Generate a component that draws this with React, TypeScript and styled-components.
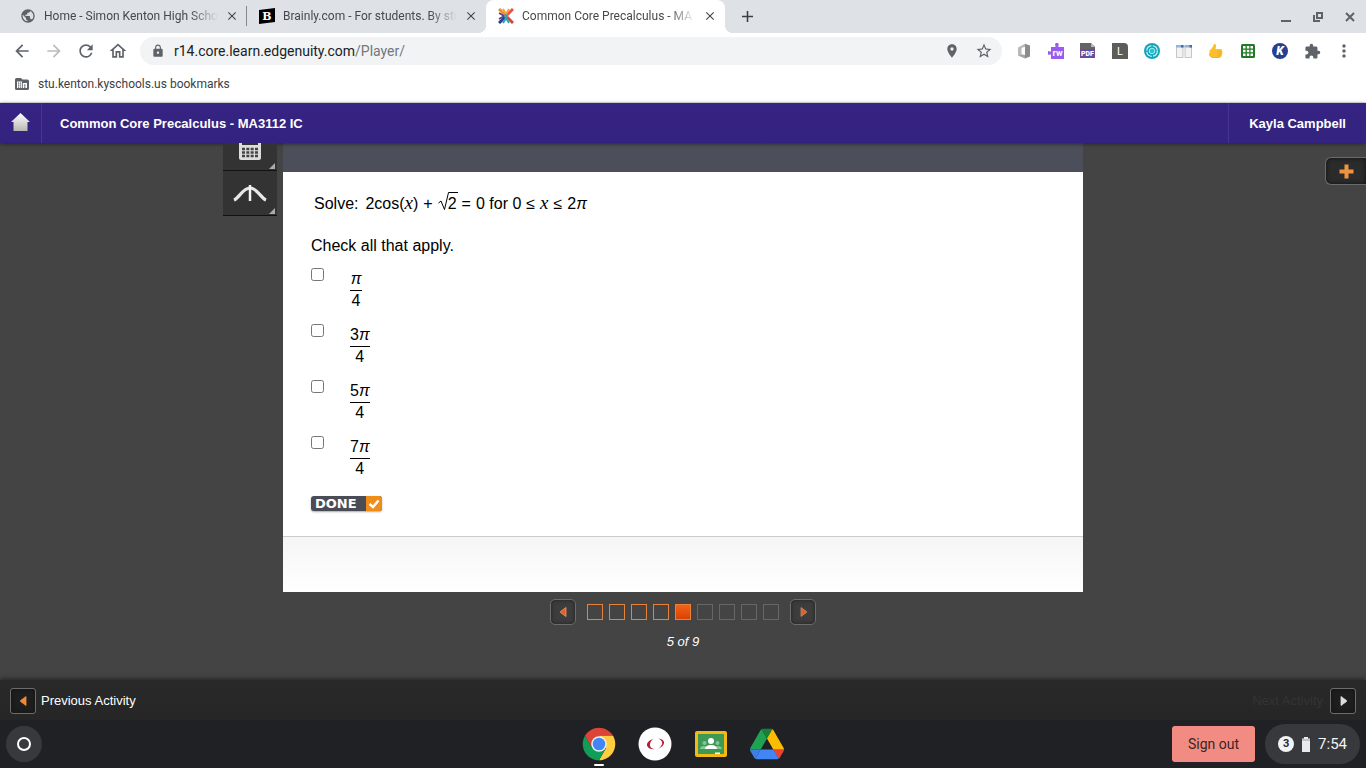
import React from 'react';
import styled, { createGlobalStyle, css } from 'styled-components';
import {
  MdAdd, MdArrowBack, MdArrowForward, MdClose, MdExtension, MdLock,
  MdMoreVert, MdOutlineHome, MdPlace, MdPublic, MdRefresh, MdStarBorder,
} from 'react-icons/md';

const GlobalStyle = createGlobalStyle`
  * { box-sizing: border-box; }
  body { margin: 0; background: #444; }
  button { font: inherit; color: inherit; border: 0; padding: 0; background: none; cursor: pointer; }
  a { color: inherit; text-decoration: none; }
  svg { display: block; flex: none; }
`;

const sans = '"Liberation Sans", Arial, sans-serif';
const roboto = 'Roboto, sans-serif';

const Screen = styled.div`
  min-height: 100vh;
  display: flex;
  flex-direction: column;
  font-family: ${sans};
`;

/* ---------- browser chrome ---------- */

const TabStrip = styled.div`
  display: flex;
  height: 33px;
  padding-left: 8px;
  background: #dee1e6;
  font: 12px/16px ${roboto};
  color: #45494d;
`;

const Tab = styled.div<{ $active?: boolean; $divided?: boolean }>`
  position: relative;
  display: flex;
  align-items: center;
  flex: 0 1 239px;
  min-width: 0;
  padding: 0 7px 1px 12px;
  border-radius: 8px 8px 0 0;
  background: ${p => (p.$active ? '#fff' : 'transparent')};
  ${p => p.$divided && css`
    &::after {
      content: '';
      position: absolute;
      right: 0;
      top: 6px;
      width: 1px;
      height: 20px;
      background: #85888c;
    }
  `}
  ${p => p.$active && css`
    &::before, &::after {
      content: '';
      position: absolute;
      bottom: 0;
      width: 8px;
      height: 8px;
    }
    &::before { left: -8px; background: radial-gradient(circle at 0 0, transparent 8px, #fff 8px); }
    &::after { right: -8px; background: radial-gradient(circle at 100% 0, transparent 8px, #fff 8px); }
  `}
`;

const TabTitle = styled.span`
  flex: 1;
  min-width: 0;
  margin: 0 6px 0 8px;
  overflow: hidden;
  white-space: nowrap;
  mask-image: linear-gradient(to right, #000 calc(100% - 28px), transparent);
`;

const IconButton = styled.button<{ $size: number; $color?: string }>`
  display: flex;
  align-items: center;
  justify-content: center;
  flex: none;
  width: ${p => p.$size}px;
  height: ${p => p.$size}px;
  color: ${p => p.$color ?? '#5f6368'};
`;

const NewTab = styled(IconButton)`
  margin: 4px 0 0 10px;
`;

const WindowControls = styled.div`
  display: flex;
  align-items: center;
  margin-left: auto;
`;

const Toolbar = styled.div`
  display: flex;
  align-items: center;
  height: 36px;
  padding: 0 6px;
  background: #fff;
`;

const AddressBar = styled.form`
  display: flex;
  align-items: center;
  flex: 1;
  height: 28px;
  margin: 0 6px;
  padding: 0 2px 0 11px;
  border-radius: 14px;
  background: #f1f3f4;
  color: #5f6368;
`;

const UrlField = styled.label`
  position: relative;
  flex: 1;
  margin-left: 9px;
  font: 14px/20px ${roboto};
`;

const UrlInput = styled.input`
  width: 100%;
  height: 20px;
  padding: 0;
  border: 0;
  outline: 0;
  background: none;
  font: inherit;
  color: transparent;
`;

const UrlText = styled.span`
  position: absolute;
  inset: 0;
  pointer-events: none;
  color: #74777b;
  b { font-weight: 400; color: #202124; }
`;

const BookmarkBar = styled.div`
  display: flex;
  align-items: center;
  height: 34px;
  padding: 0 14px 4px;
  border-bottom: 1px solid #e4e4ea;
  background: #fff;
`;

const Bookmark = styled.a`
  display: flex;
  align-items: center;
  gap: 8px;
  font: 12px/16px ${roboto};
  color: #3c4043;
`;

/* ---------- course player ---------- */

const CourseBar = styled.header`
  position: relative;
  display: flex;
  align-items: stretch;
  height: 40px;
  background: linear-gradient(#372382, #33237f);
  box-shadow: 0 1px 4px rgba(0, 0, 0, 0.5);
  color: #fff;
  font-size: 13px;
  line-height: 16px;
  font-weight: bold;
`;

const HomeLink = styled.a`
  display: flex;
  align-items: center;
  justify-content: center;
  width: 42px;
  padding-bottom: 2px;
  border-right: 1px solid #46368f;
`;

const CourseTitle = styled.h1`
  display: flex;
  align-items: center;
  margin: 0;
  padding: 2px 0 0 18px;
  font: inherit;
`;

const Student = styled.div`
  display: flex;
  align-items: center;
  margin-left: auto;
  padding: 2px 20px 0;
  border-left: 1px solid #46368f;
`;

const Workspace = styled.main`
  flex: 1;
  display: grid;
  grid-template-columns: 1fr minmax(0, 800px) 1fr;
  align-items: start;
  background: #444;
`;

const ToolRail = styled.div`
  display: flex;
  flex-direction: column;
  align-items: flex-end;
  padding-right: 6px;
`;

const ToolButton = styled.button<{ $height: number }>`
  position: relative;
  display: flex;
  align-items: flex-end;
  justify-content: center;
  width: 54px;
  height: ${p => p.$height}px;
  padding-bottom: 10px;
  overflow: hidden;
  background: #333;
  border-bottom: 1px solid #111;
  &::after {
    content: '';
    position: absolute;
    right: 2px;
    bottom: 1px;
    border: 3px solid transparent;
    border-right-color: #aaa;
    border-bottom-color: #aaa;
  }
`;

const NotesTab = styled.button`
  display: flex;
  align-items: center;
  justify-self: end;
  width: 41px;
  height: 28px;
  margin-top: 14px;
  padding-left: 13px;
  border: 1px solid #666c70;
  border-right: 0;
  border-radius: 6px 0 0 6px;
  background: #2b2b2b;
  box-shadow: inset 0 0 4px #111;
`;

const StageTop = styled.div`
  height: 29px;
  background: #4c4e59;
`;

const Question = styled.form`
  display: flex;
  flex-direction: column;
  align-items: flex-start;
  padding: 20px 28px 25px;
  background: #fff;
  color: #000;
  font-size: 16px;
  line-height: 24px;
`;

const Equation = styled.div`
  display: flex;
  align-items: baseline;
  gap: 5px;
  height: 24px;
  margin-left: 3px;
  white-space: nowrap;
`;

const Variable = styled.i`
  font-family: "Liberation Serif", serif;
  font-size: 19px;
  line-height: 20px;
`;

const Pi = styled.i`
  font-family: ${sans};
`;

const Prompt = styled.span`
  margin-right: 2px;
`;

const Root = styled.span`
  position: relative;
  padding-left: 10px;
  svg { position: absolute; left: 0; top: 0; }
`;

const Instruction = styled.p`
  margin: 18px 0 10px;
  line-height: 24px;
`;

const Option = styled.label`
  display: flex;
  align-items: flex-start;
  height: 56px;
  input { width: 13px; height: 13px; margin: 0 26px 0 0; }
`;

const Fraction = styled.span`
  display: flex;
  flex-direction: column;
  align-items: center;
  margin-top: 2px;
  line-height: 20px;
`;

const Numerator = styled.span`
  height: 21px;
  min-width: 12px;
  line-height: 18px;
  text-align: center;
  border-bottom: 1px solid #000;
`;

const DoneButton = styled.button`
  display: flex;
  align-items: center;
  height: 15px;
  margin-top: 4px;
  padding-left: 4px;
  gap: 9px;
  border-radius: 3px;
  overflow: hidden;
  background: #4a4c55;
  box-shadow: 0 1px 2px #aaa;
  color: #fff;
  font: bold 13px/15px "DejaVu Sans", sans-serif;
`;

const DoneTick = styled.span`
  display: flex;
  align-items: center;
  justify-content: center;
  width: 16px;
  height: 15px;
  background: #f08c1a;
`;

const StageBottom = styled.div`
  height: 56px;
  border-top: 1px solid #ccc;
  background: linear-gradient(#f5f5f5, #fff);
`;

const Pager = styled.nav`
  display: flex;
  align-items: center;
  justify-content: center;
  gap: 11px;
  padding-top: 7px;
`;

const ArrowButton = styled.button<{ $round?: boolean }>`
  display: flex;
  align-items: center;
  justify-content: center;
  width: 26px;
  height: 26px;
  border: 1px solid #6c6c6c;
  border-radius: ${p => (p.$round ? 5 : 3)}px;
  background: ${p => (p.$round ? '#3d3d3d' : '#1e1e1e')};
  box-shadow: inset 0 0 4px ${p => (p.$round ? '#222' : '#111')};
`;

const Steps = styled.div`
  display: flex;
  gap: 6px;
`;

const Step = styled.button<{ $state: 'done' | 'current' | 'todo' }>`
  width: 16px;
  height: 16px;
  border: 1px solid ${p => (p.$state === 'todo' ? '#666' : '#e8813a')};
  background: ${p => (p.$state === 'current' ? 'linear-gradient(#f4611a, #d84200)' : 'transparent')};
`;

const PageCount = styled.p`
  margin: 9px 0 0;
  text-align: center;
  font-size: 13px;
  line-height: 16px;
  font-style: italic;
  color: #fff;
`;

const ActivityBar = styled.footer`
  display: flex;
  align-items: center;
  justify-content: space-between;
  height: 40px;
  padding: 2px 10px 0;
  background: linear-gradient(#292929, #262626);
  box-shadow: 0 -1px 5px rgba(0, 0, 0, 0.5);
`;

const Activity = styled.label<{ $muted?: boolean }>`
  display: flex;
  align-items: center;
  gap: ${p => (p.$muted ? 7 : 5)}px;
  font-size: 13px;
  line-height: 16px;
  color: ${p => (p.$muted ? '#343434' : '#fff')};
`;

/* ---------- system shelf ---------- */

const Shelf = styled.div`
  display: grid;
  grid-template-columns: 1fr auto 1fr;
  align-items: center;
  height: 48px;
  padding: 0 6px;
  background: #202124;
  font-family: ${roboto};
`;

const Launcher = styled(IconButton)`
  border-radius: 50%;
  background: #37393c;
`;

const Apps = styled.div`
  display: flex;
  gap: 22px;
`;

const AppButton = styled.button<{ $running?: boolean }>`
  position: relative;
  width: 34px;
  height: 34px;
  ${p => p.$running && css`
    &::after {
      content: '';
      position: absolute;
      left: 12px;
      bottom: -5px;
      width: 10px;
      height: 2px;
      border-radius: 1px;
      background: #fff;
    }
  `}
`;

const Tray = styled.div`
  display: flex;
  justify-content: flex-end;
  align-items: center;
  gap: 10px;
`;

const SignOut = styled.button`
  height: 36px;
  padding: 0 16px;
  border-radius: 3px;
  background: #f28b82;
  color: #3a2426;
  font-size: 14px;
  line-height: 20px;
`;

const Status = styled.button`
  display: flex;
  align-items: center;
  gap: 8px;
  height: 40px;
  padding: 0 13px;
  border-radius: 20px;
  background: #37393c;
  color: #f1f3f4;
  font-size: 15px;
  line-height: 20px;
`;

const Notices = styled.span`
  width: 16px;
  height: 16px;
  border-radius: 50%;
  background: #f1f3f4;
  color: #26282b;
  font-size: 11px;
  font-weight: 700;
  line-height: 16px;
  text-align: center;
`;

/* ---------- drawings ---------- */

const BrainlyIcon = () => (
  <svg width="16" height="16" viewBox="0 0 16 16">
    <path d="M0 2 16 0v14L0 16z" fill="#000" />
    <text x="8" y="12" fontSize="11" fontWeight="700" textAnchor="middle" fill="#fff" fontFamily="DejaVu Serif, serif">B</text>
  </svg>
);

const EdgenuityIcon = () => (
  <svg width="16" height="16" viewBox="0 0 16 16" fill="none" strokeWidth="3">
    <path d="M1 1l6 6" stroke="#f08a2c" />
    <path d="M15 1L9 7" stroke="#e4573d" />
    <path d="M1 15l6-6" stroke="#2c3f8f" />
    <path d="M15 15L9 9" stroke="#d8443c" />
    <path d="M5 1l3 5 3-5" stroke="#f5a13a" strokeWidth="2" />
    <path d="M1 5l5 3-5 3" stroke="#5b3a86" strokeWidth="1.5" />
    <path d="M5 15l3-5 3 5" stroke="#2ba5b5" strokeWidth="2" />
    <circle cx="8" cy="8" r="2" fill="#3a9bc0" />
  </svg>
);

const ManagedFolderIcon = () => (
  <svg width="16" height="16" viewBox="0 0 16 16">
    <path d="M2.5 2H7l1.500 1.500h5A1.500 1.500 0 0 1 15 5v7.500a1.500 1.500 0 0 1-1.500 1.500h-11A1.500 1.500 0 0 1 1 12.500v-9A1.500 1.500 0 0 1 2.500 2z" fill="#5f6368" />
    <path d="M3 5.500h5V7h5v5H3z" fill="#fff" />
    <path d="M4 6.500h1.200v1.200H4zM6 6.500h1.200v1.200H6zM4 8.500h1.200v1.200H4zM6 8.500h1.200v1.200H6zM4 10.500h1.200v1.200H4zM6 10.500h1.200v1.200H6zM8 7h.8v5H8zM10 8.500h1.500v1.200H10zM10 10.500h1.500v1.200H10z" fill="#5f6368" />
  </svg>
);

const MinimizeIcon = () => (
  <svg width="12" height="12" viewBox="0 0 12 12"><path d="M1 10h10" stroke="#5f6368" strokeWidth="2" /></svg>
);

const RestoreIcon = () => (
  <svg width="12" height="12" viewBox="0 0 12 12" fill="none" stroke="#5f6368" strokeWidth="2">
    <path d="M5 2h5v5H5z" /><path d="M2 4v6h6" />
  </svg>
);

const CloseWindowIcon = () => (
  <svg width="12" height="12" viewBox="0 0 12 12"><path d="M2 2l8 8M10 2l-8 8" stroke="#5f6368" strokeWidth="2" /></svg>
);

const OfficeIcon = () => (
  <svg width="16" height="16" viewBox="0 0 16 16">
    <path d="M2 4.500L9 .8v3L5.500 5v6.200L2 12.600z" fill="#b9b9b9" />
    <path d="M9 .8l5 1.800v10.800L9 15.400z" fill="#8c8c8c" />
    <path d="M2 12.600l3.500-1.400L9 12v3.400z" fill="#a5a5a5" />
  </svg>
);

const ReadWriteIcon = () => (
  <svg width="16" height="16" viewBox="0 0 16 16">
    <path d="M3 4h4.400V2.600a1.800 1.800 0 1 1 3 0V4H16v12H3v-4.600H1.600a1.800 1.800 0 1 1 0-3H3z" fill="#9a5cf0" />
    <text x="9.600" y="12.600" fontSize="9" fontWeight="700" textAnchor="middle" fill="#fff" fontFamily="Roboto, sans-serif">rw</text>
  </svg>
);

const PdfIcon = () => (
  <svg width="16" height="16" viewBox="0 0 16 16">
    <path d="M0 0h11l4 4v4H0z" fill="#636466" />
    <path d="M11 0v4h4z" fill="#b9babc" />
    <path d="M0 6h15v9H0z" fill="#6c4b9c" />
    <text x="7.500" y="13.200" fontSize="7" fontWeight="900" textAnchor="middle" fill="#fff" fontFamily="Roboto, sans-serif">PDF</text>
  </svg>
);

const LetterIcon = () => (
  <svg width="16" height="16" viewBox="0 0 16 16">
    <path d="M0 0h12a4 4 0 0 1 4 4v12H0z" fill="#5c5c5c" />
    <text x="8" y="12" fontSize="11" textAnchor="middle" fill="#fff" fontFamily="Roboto, sans-serif">L</text>
  </svg>
);

const RingIcon = () => (
  <svg width="16" height="16" viewBox="0 0 16 16" fill="none">
    <circle cx="8" cy="8" r="8" fill="#12a5b8" />
    <circle cx="8" cy="8" r="5.300" stroke="#d8f7fb" strokeWidth="1.200" strokeDasharray="7 1.400" />
    <circle cx="8" cy="8" r="2.800" fill="#21c3d8" stroke="#a8ecf4" />
  </svg>
);

const PanesIcon = () => (
  <svg width="16" height="16" viewBox="0 0 16 16">
    <path d="M.5 2.500h6.500v12H.5zM9 2.500h6.500v12H9z" fill="#f3f3f3" stroke="#c4c6c8" />
    <path d="M0 2h7.500v2.400H0zM8.500 2H16v2.400H8.500z" fill="#94b3d6" />
    <path d="M5 2h2.500v2.400H5zM13.500 2H16v2.400h-2.500z" fill="#3f6fa8" />
  </svg>
);

const ThumbIcon = () => (
  <svg width="16" height="16" viewBox="0 0 16 16">
    <path d="M5.600 1.400c1-1 2.400-.4 2.500 1.100.1 1.300-.3 2.400-.5 3.500h4.900c1.500 0 2 1.300 1.400 2.200.8.6.7 1.700.1 2.200.5.8.2 1.700-.5 2.100.2 1.300-.6 2.200-2 2.200H6c-3 0-4.500-1.300-4.500-4V8.200C1.500 6.600 5.200 5 5.600 1.400z" fill="#fcbf2e" />
    <path d="M9.500 8.600h4M9.500 10.700h4M9.500 12.700h3.300" stroke="#ee9f1c" strokeWidth=".7" />
    <path d="M1.600 10.500c0 2.700 1.500 4 4.400 4h5" fill="none" stroke="#f0a01e" strokeWidth=".8" />
  </svg>
);

const SheetIcon = () => (
  <svg width="16" height="16" viewBox="0 0 16 16">
    <rect x="1" y="1" width="14" height="14" rx="1.500" fill="#1f7a24" />
    <path d="M3 3h2.500v2.500H3zM6.800 3h2.500v2.500H6.800zM10.500 3H13v2.500h-2.500zM3 6.800h2.500v2.500H3zM6.800 6.800h2.500v2.500H6.800zM10.500 6.800H13v2.500h-2.500zM3 10.500h2.500V13H3zM6.800 10.500h2.500V13H6.800zM10.500 10.500H13V13h-2.500z" fill="#fff" />
  </svg>
);

const KamiIcon = () => (
  <svg width="16" height="16" viewBox="0 0 16 16">
    <circle cx="8" cy="8" r="8" fill="#26408f" />
    <text x="8" y="12" fontSize="12" fontWeight="900" fontStyle="italic" textAnchor="middle" fill="#fff" fontFamily="Roboto, sans-serif">K</text>
  </svg>
);

const HouseIcon = () => (
  <svg width="19" height="18" viewBox="0 0 19 18">
    <defs>
      <linearGradient id="house" x2="0" y2="1"><stop stopColor="#fff" /><stop offset="1" stopColor="#b9b7b4" /></linearGradient>
    </defs>
    <path d="M9.500 0L19 9h-2.500v9h-14V9H0z" fill="url(#house)" />
  </svg>
);

const CalculatorIcon = () => (
  <svg width="22" height="24" viewBox="0 0 22 24">
    <rect width="22" height="24" rx="2" fill="#ddd" />
    <path d="M3 3h16v6H3z" fill="#333" />
    <path d="M3 13h16M3 16.500h16M3 20h16" stroke="#444" strokeWidth="2.400" strokeDasharray="3 1.330" />
  </svg>
);

const CurveIcon = () => (
  <svg width="34" height="21" viewBox="0 0 34 21" fill="none">
    <path d="M1 16C6 14 10 4 17 4s11 10 16 12" stroke="#e8e8e8" strokeWidth="3.200" />
    <path d="M17 1v16" stroke="#f4f4f4" strokeWidth="2.500" />
  </svg>
);

const PlusIcon = () => (
  <svg width="15" height="15" viewBox="0 0 15 15"><path d="M7.500 .5v14M.5 7.500h14" stroke="#ee9440" strokeWidth="4" /></svg>
);

const RadicalIcon = () => (
  <svg width="20" height="20" viewBox="0 0 20 20"><path d="M.5 11l2.500-2 3.500 8.500L10.500.5h9.500" fill="none" stroke="#000" /></svg>
);

const TickIcon = () => (
  <svg width="12" height="10" viewBox="0 0 12 10"><path d="M1.500 5L5 8l5.500-6.500" fill="none" stroke="#fff" strokeWidth="2.600" /></svg>
);

const Arrow = ({ dir, color, edge }: { dir: 'left' | 'right'; color: string; edge: string }) => (
  <svg width="7" height="10" viewBox="0 0 7 10">
    <path d={dir === 'left' ? 'M6 .5v9L.5 5.500v-1z' : 'M1 .5v9l5.500-4v-1z'} fill={color} stroke={edge} strokeWidth=".8" />
  </svg>
);

const ChromeIcon = () => (
  <svg width="34" height="34" viewBox="1 1 46 46">
    <path d="M4.950 13a22 22 0 0 1 38.100 0H24L14.470 29.500z" fill="#db4437" />
    <path d="M43.050 13A22 22 0 0 1 24 46l9.530-16.500L24 13z" fill="#ffcd40" />
    <path d="M24 46A22 22 0 0 1 4.950 13l9.520 16.500h19.060z" fill="#0f9d58" />
    <circle cx="24" cy="24" r="10.500" fill="#f1f1f1" />
    <circle cx="24" cy="24" r="8.500" fill="#4285f4" />
  </svg>
);

const SwirlIcon = () => (
  <svg width="34" height="34" viewBox="0 0 34 34">
    <circle cx="17" cy="17" r="16.500" fill="#fff" />
    <path d="M15.500 12c-4 .8-7.500 4-6.300 7 1 2.300 4 3.400 7.300 3.200-3-.7-5-2.400-4.600-5 .3-2 1.600-4 3.600-5.200z" fill="#b71c35" />
    <path d="M20 11.500c4 .2 6.500 2.200 6 4.800-.5 2.400-3 4.600-6 5.500 2.200-1.500 4-3.500 4.200-5.600.2-2-1.700-3.800-4.200-4.700z" fill="#b71c35" />
  </svg>
);

const ClassroomIcon = () => (
  <svg width="34" height="34" viewBox="0 0 34 34">
    <rect x="1" y="4" width="32" height="26" rx="2" fill="#f5b916" />
    <rect x="4" y="7" width="26" height="20" fill="#3c9a55" />
    <circle cx="10.500" cy="16" r="2" fill="#87c596" /><circle cx="23.500" cy="16" r="2" fill="#87c596" />
    <path d="M6 22c0-4 7-4 9 0zM19 22c2-4 9-4 9 0z" fill="#87c596" />
    <circle cx="17" cy="14" r="3" fill="#fff" />
    <path d="M11 22c0-5.500 12-5.500 12 0z" fill="#fff" />
    <path d="M21 25.500h5v1.500h-5z" fill="#fff" />
  </svg>
);

const DriveIcon = () => (
  <svg width="34" height="34" viewBox="0 -4.650 87.300 87.300">
    <path d="M6.600 66.850l3.850 6.650c.8 1.400 1.950 2.500 3.300 3.300L27.500 53H0c0 1.550.4 3.100 1.200 4.500z" fill="#3f7de8" />
    <path d="M43.650 25L29.900 1.200c-1.350.8-2.500 1.900-3.300 3.300l-25.400 44A9.060 9.060 0 0 0 0 53h27.500z" fill="#1fa353" />
    <path d="M73.550 76.800c1.350-.8 2.500-1.900 3.300-3.300l1.600-2.750 7.650-13.250c.8-1.400 1.200-2.950 1.200-4.500H59.800l5.850 11.500z" fill="#ea4335" />
    <path d="M43.650 25L57.400 1.200C56.050.4 54.500 0 52.900 0H34.400c-1.600 0-3.150.45-4.500 1.200z" fill="#188038" />
    <path d="M59.800 53H27.500L13.750 76.800c1.350.8 2.900 1.200 4.500 1.200h50.800c1.600 0 3.150-.45 4.500-1.200z" fill="#4285f4" />
    <path d="M73.400 26.500l-12.700-22c-.8-1.400-1.950-2.500-3.300-3.300L43.650 25 59.800 53h27.450c0-1.550-.4-3.100-1.200-4.500z" fill="#fbbc04" />
  </svg>
);

const BatteryIcon = () => (
  <svg width="8" height="15" viewBox="0 0 8 15"><path d="M2 0h4v1.500h2V15H0V1.500h2z" fill="#e8eaed" /><path d="M0 3h8" stroke="#9a9c9f" /></svg>
);

const LauncherIcon = () => (
  <svg width="16" height="16" viewBox="0 0 16 16"><circle cx="8" cy="8" r="6" fill="none" stroke="#fff" strokeWidth="2" /></svg>
);

/* ---------- page ---------- */

const tabs = [
  { title: 'Home - Simon Kenton High Scho', icon: <MdPublic size={16} color="#5f6368" />, divided: true },
  { title: 'Brainly.com - For students. By stu', icon: <BrainlyIcon /> },
  { title: 'Common Core Precalculus - MA', icon: <EdgenuityIcon />, active: true },
];

const extensions = [
  { name: 'Office', icon: <OfficeIcon /> },
  { name: 'Read&Write', icon: <ReadWriteIcon /> },
  { name: 'PDF', icon: <PdfIcon /> },
  { name: 'Lightspeed', icon: <LetterIcon /> },
  { name: 'Ring', icon: <RingIcon /> },
  { name: 'Panes', icon: <PanesIcon /> },
  { name: 'Thumbs up', icon: <ThumbIcon /> },
  { name: 'Sheet', icon: <SheetIcon /> },
  { name: 'Kami', icon: <KamiIcon /> },
  { name: 'Extensions', icon: <MdExtension size={17} /> },
  { name: 'Menu', icon: <MdMoreVert size={20} /> },
];

const options = ['', '3', '5', '7'];

const apps = [
  { name: 'Chrome', icon: <ChromeIcon />, running: true },
  { name: 'Testing', icon: <SwirlIcon /> },
  { name: 'Classroom', icon: <ClassroomIcon /> },
  { name: 'Drive', icon: <DriveIcon /> },
];

export default function App() {
  const current = 5;
  return (
    <Screen>
      <GlobalStyle />
      <TabStrip>
        {tabs.map(t => (
          <Tab key={t.title} $active={t.active} $divided={t.divided}>
            {t.icon}
            <TabTitle>{t.title}</TabTitle>
            <IconButton $size={16} $color="#45494d" aria-label="Close tab"><MdClose size={14} /></IconButton>
          </Tab>
        ))}
        <NewTab $size={24} $color="#3c4043" aria-label="New tab"><MdAdd size={19} /></NewTab>
        <WindowControls>
          <IconButton $size={32} aria-label="Minimize"><MinimizeIcon /></IconButton>
          <IconButton $size={32} aria-label="Restore"><RestoreIcon /></IconButton>
          <IconButton $size={32} aria-label="Close window"><CloseWindowIcon /></IconButton>
        </WindowControls>
      </TabStrip>

      <Toolbar>
        <IconButton $size={32} aria-label="Back"><MdArrowBack size={20} /></IconButton>
        <IconButton $size={32} $color="#babcbe" aria-label="Forward"><MdArrowForward size={20} /></IconButton>
        <IconButton $size={32} aria-label="Reload"><MdRefresh size={20} /></IconButton>
        <IconButton $size={32} aria-label="Home"><MdOutlineHome size={20} /></IconButton>
        <AddressBar onSubmit={e => e.preventDefault()}>
          <MdLock size={14} />
          <UrlField>
            <UrlInput aria-label="Address" defaultValue="" />
            <UrlText><b>r14.core.learn.edgenuity.com</b>/Player/</UrlText>
          </UrlField>
          <IconButton type="button" $size={32} aria-label="Location"><MdPlace size={16} /></IconButton>
          <IconButton type="button" $size={32} aria-label="Bookmark this page"><MdStarBorder size={18} /></IconButton>
        </AddressBar>
        {extensions.map(e => (
          <IconButton key={e.name} $size={32} aria-label={e.name}>{e.icon}</IconButton>
        ))}
      </Toolbar>

      <BookmarkBar>
        <Bookmark href="#bookmarks"><ManagedFolderIcon />stu.kenton.kyschools.us bookmarks</Bookmark>
      </BookmarkBar>

      <CourseBar>
        <HomeLink href="#home" aria-label="Home"><HouseIcon /></HomeLink>
        <CourseTitle>Common Core Precalculus - MA3112 IC</CourseTitle>
        <Student>Kayla Campbell</Student>
      </CourseBar>

      <Workspace>
        <ToolRail>
          <ToolButton $height={28} aria-label="Calculator"><CalculatorIcon /></ToolButton>
          <ToolButton $height={45} aria-label="Graphing"><CurveIcon /></ToolButton>
        </ToolRail>
        <section>
          <StageTop />
          <Question onSubmit={e => e.preventDefault()}>
            <Equation>
              <Prompt>Solve:</Prompt>
              <span>2cos(<Variable>x</Variable>)</span>
              <span>+</span>
              <Root><RadicalIcon />2</Root>
              <span>=</span>
              <span>0 for 0</span>
              <span>≤</span>
              <Variable>x</Variable>
              <span>≤</span>
              <span>2<Pi>π</Pi></span>
            </Equation>
            <Instruction>Check all that apply.</Instruction>
            {options.map(n => (
              <Option key={n}>
                <input type="checkbox" />
                <Fraction>
                  <Numerator>{n}<Pi>π</Pi></Numerator>
                  <span>4</span>
                </Fraction>
              </Option>
            ))}
            <DoneButton type="submit">DONE<DoneTick><TickIcon /></DoneTick></DoneButton>
          </Question>
          <StageBottom />
          <Pager>
            <ArrowButton $round aria-label="Previous"><Arrow dir="left" color="#e0622a" edge="#f09a62" /></ArrowButton>
            <Steps>
              {Array.from({ length: 9 }, (_, i) => i + 1).map(n => (
                <Step key={n} aria-label={`Question ${n}`} $state={n < current ? 'done' : n === current ? 'current' : 'todo'} />
              ))}
            </Steps>
            <ArrowButton $round aria-label="Next"><Arrow dir="right" color="#e0622a" edge="#b98a6a" /></ArrowButton>
          </Pager>
          <PageCount>5 of 9</PageCount>
        </section>
        <NotesTab aria-label="Add note"><PlusIcon /></NotesTab>
      </Workspace>

      <ActivityBar>
        <Activity>
          <ArrowButton><Arrow dir="left" color="#f08a35" edge="#f08a35" /></ArrowButton>
          Previous Activity
        </Activity>
        <Activity $muted>
          Next Activity
          <ArrowButton><Arrow dir="right" color="#ddd" edge="#ddd" /></ArrowButton>
        </Activity>
      </ActivityBar>

      <Shelf>
        <Launcher $size={36} aria-label="Launcher"><LauncherIcon /></Launcher>
        <Apps>
          {apps.map(a => (
            <AppButton key={a.name} $running={a.running} aria-label={a.name}>{a.icon}</AppButton>
          ))}
        </Apps>
        <Tray>
          <SignOut>Sign out</SignOut>
          <Status><Notices>3</Notices><BatteryIcon />7:54</Status>
        </Tray>
      </Shelf>
    </Screen>
  );
}
